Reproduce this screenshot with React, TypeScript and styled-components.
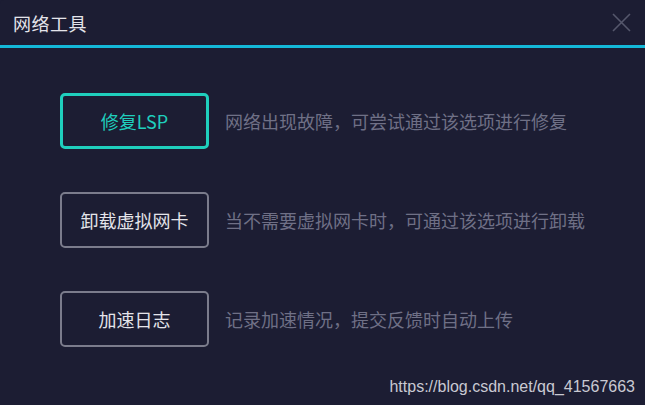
import React from "react";
import styled, { createGlobalStyle } from "styled-components";

const theme = {
  bg: "#1c1d33",
  cyan: "#14b8d8",
  teal: "#1fcfbd",
  text: "#e4e4ea",
  muted: "#6f7086",
  border: "#7b7c8c",
  close: "#55576c",
};

const GlobalStyle = createGlobalStyle`
  html, body {
    margin: 0;
    padding: 0;
    background: ${theme.bg};
  }
  body {
    font-family: "Noto Sans CJK SC", "Noto Sans", sans-serif;
  }
`;

const Window = styled.div`
  position: relative;
  width: 645px;
  height: 405px;
  background: ${theme.bg};
  border-radius: 4px 4px 0 0;
  overflow: hidden;
`;

const TitleBar = styled.div`
  height: 45px;
  border-bottom: 3px solid ${theme.cyan};
  display: flex;
  align-items: center;
  justify-content: space-between;
  padding: 0 14px 0 13px;
`;

const Title = styled.h1`
  margin: 0;
  font-size: 18px;
  font-weight: 400;
  line-height: 1;
  color: ${theme.text};
  letter-spacing: 0.5px;
`;

const CloseButton = styled.button`
  width: 20px;
  height: 20px;
  padding: 0;
  border: none;
  background: none;
  display: flex;
  align-items: center;
  justify-content: center;
  cursor: pointer;
`;

const Content = styled.div`
  display: flex;
  flex-direction: column;
  gap: 43px;
  padding: 45px 0 0 60px;
`;

const Row = styled.div`
  display: flex;
  align-items: center;
  gap: 16px;
`;

const ActionButton = styled.button<{ $active?: boolean }>`
  box-sizing: border-box;
  width: 149px;
  height: 56px;
  border-radius: 5px;
  background: transparent;
  border: ${(p) => (p.$active ? `3px solid ${theme.teal}` : `2px solid ${theme.border}`)};
  color: ${(p) => (p.$active ? theme.teal : theme.text)};
  font-family: "Noto Sans CJK SC", "Noto Sans", sans-serif;
  font-size: 18px;
  line-height: 1;
  cursor: pointer;
  display: flex;
  align-items: center;
  justify-content: center;
`;

const Description = styled.span`
  font-size: 18px;
  line-height: 1;
  color: ${theme.muted};
`;

const Watermark = styled.div`
  position: absolute;
  right: 10px;
  bottom: 9px;
  font-family: "Liberation Sans", Arial, sans-serif;
  font-size: 16px;
  line-height: 18px;
  color: #c9c9d2;
`;

const tools = [
  { label: "修复LSP", desc: "网络出现故障，可尝试通过该选项进行修复", active: true },
  { label: "卸载虚拟网卡", desc: "当不需要虚拟网卡时，可通过该选项进行卸载" },
  { label: "加速日志", desc: "记录加速情况，提交反馈时自动上传" },
];

const App: React.FC = () => {
  return (
    <>
      <GlobalStyle />
      <Window>
        <TitleBar>
          <Title>网络工具</Title>
          <CloseButton aria-label="关闭">
            <svg width="19" height="19" viewBox="0 0 19 19">
              <path d="M1 1 L18 18 M18 1 L1 18" stroke={theme.close} strokeWidth="1.6" />
            </svg>
          </CloseButton>
        </TitleBar>
        <Content>
          {tools.map((t) => (
            <Row key={t.label}>
              <ActionButton $active={t.active}>{t.label}</ActionButton>
              <Description>{t.desc}</Description>
            </Row>
          ))}
        </Content>
        <Watermark>https://blog.csdn.net/qq_41567663</Watermark>
      </Window>
    </>
  );
};

export default App;
